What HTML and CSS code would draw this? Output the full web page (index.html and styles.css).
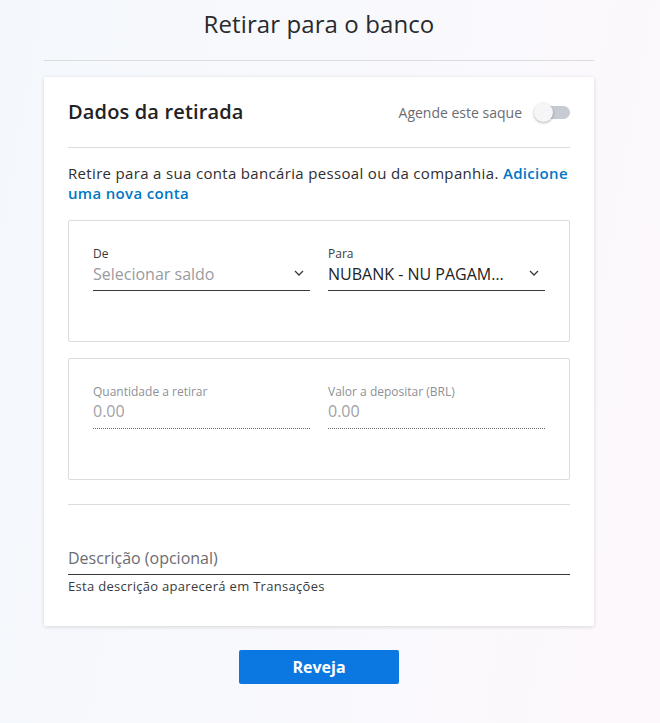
FILE: index.html
```html
<!DOCTYPE html>
<html lang="pt">
<head>
<meta charset="utf-8">
<title>Retirar para o banco</title>
<link rel="stylesheet" href="styles.css">
</head>
<body>
<div class="page">
  <h1 class="title">Retirar para o banco</h1>
  <div class="card">
    <div class="card-head">
      <h2 class="card-title">Dados da retirada</h2>
      <div class="schedule">
        <span class="schedule-label">Agende este saque</span>
        <span class="toggle"><span class="toggle-track"></span><span class="toggle-knob"></span></span>
      </div>
    </div>
    <p class="intro">Retire para a sua conta bancária pessoal ou da companhia. <a class="link" href="#">Adicione uma nova conta</a></p>

    <div class="box">
      <div class="field">
        <div class="label">De</div>
        <div class="select">
          <span class="value placeholder">Selecionar saldo</span>
          <svg class="chev" width="10" height="6" viewBox="0 0 10 6"><path d="M1 1l4 4 4-4" fill="none" stroke="#393a3d" stroke-width="1.3"/></svg>
        </div>
      </div>
      <div class="field">
        <div class="label">Para</div>
        <div class="select">
          <span class="value">NUBANK - NU PAGAM…</span>
          <svg class="chev" width="10" height="6" viewBox="0 0 10 6"><path d="M1 1l4 4 4-4" fill="none" stroke="#393a3d" stroke-width="1.3"/></svg>
        </div>
      </div>
    </div>

    <div class="box">
      <div class="field">
        <div class="label muted">Quantidade a retirar</div>
        <div class="amount">0.00</div>
      </div>
      <div class="field">
        <div class="label muted">Valor a depositar (BRL)</div>
        <div class="amount">0.00</div>
      </div>
    </div>

    <div class="divider"></div>

    <div class="desc-input">Descrição (opcional)</div>
    <div class="helper">Esta descrição aparecerá em Transações</div>
  </div>
  <div class="actions">
    <button class="btn">Reveja</button>
  </div>
</div>
</body>
</html>
```
FILE: styles.css
```css
* { box-sizing: border-box; }
html, body { margin: 0; padding: 0; }
body {
  font-family: "Open Sans", "Noto Sans", sans-serif;
  color: #393a3d;
  background: linear-gradient(100deg, #f4f8fc 0%, #f9f9fd 55%, #fdf8fb 100%);
  min-height: 723px;
}
.page {
  width: 550px;
  margin-left: 44px;
}
.title {
  margin: 0;
  height: 61px;
  line-height: 48px;
  text-align: center;
  font-size: 24px;
  font-weight: 400;
  color: #2a2a2c;
  border-bottom: 1px solid #dcdcde;
  letter-spacing: 0.1px;
}
.card {
  margin-top: 16px;
  background: #fff;
  border-radius: 2px;
  box-shadow: 0 1px 4px rgba(0,0,0,0.14);
  padding: 24px 24px 31px;
}
.card-head {
  display: flex;
  justify-content: space-between;
  align-items: center;
  height: 22px;
  padding-bottom: 24px;
  border-bottom: 1px solid #dcdcde;
  box-sizing: content-box;
}
.card-title {
  margin: 0;
  font-size: 20px;
  font-weight: 600;
  color: #222;
  line-height: 22px;
  letter-spacing: 0.15px;
}
.schedule {
  display: flex;
  align-items: center;
  gap: 12px;
}
.schedule-label {
  font-size: 14px;
  color: #6b6c72;
}
.toggle {
  position: relative;
  display: block;
  width: 36px;
  height: 20px;
}
.toggle-track {
  position: absolute;
  left: 6px;
  top: 4px;
  width: 30px;
  height: 13px;
  border-radius: 7px;
  background: #c7cbd4;
}
.toggle-knob {
  position: absolute;
  left: 0;
  top: 1px;
  width: 19px;
  height: 19px;
  border-radius: 50%;
  background: #f6f6f8;
  box-shadow: 0 1px 3px rgba(0,0,0,0.3);
}
.intro {
  margin: 15px 0 0;
  font-size: 15px;
  line-height: 20px;
  color: #2e2e30;
  font-weight: 500;
  letter-spacing: 0.33px;
}
.link {
  color: #0077c5;
  text-decoration: none;
  font-weight: 600;
}
.box {
  margin-top: 17px;
  height: 122px;
  border: 1px solid #dcdcde;
  border-radius: 2px;
  padding: 25px 24px 0;
  display: grid;
  grid-template-columns: 217px 217px;
  column-gap: 18px;
  align-items: start;
}
.box + .box { margin-top: 16px; }
.label {
  font-size: 12px;
  line-height: 16px;
  color: #393a3d;
}
.label.muted { color: #8d9096; }
.select {
  display: flex;
  align-items: center;
  justify-content: space-between;
  padding-bottom: 4px;
  border-bottom: 1px solid #393a3d;
  box-sizing: content-box;
  height: 24px;
}
.value {
  font-size: 16px;
  line-height: 24px;
  color: #222;
  white-space: nowrap;
}
.value.placeholder { color: #999b9f; }
.chev { margin-right: 6px; margin-top: -2px; }
.amount {
  font-size: 16px;
  line-height: 22px;
  color: #a0a2a6;
  padding-bottom: 6px;
  border-bottom: 1px dotted #6b6c72;
}
.divider {
  margin-top: 24px;
  border-top: 1px solid #dcdcde;
}
.desc-input {
  margin-top: 37px;
  height: 33px;
  line-height: 32px;
  font-size: 16px;
  color: #6b6c72;
  border-bottom: 1px solid #393a3d;
}
.helper {
  margin-top: 2px;
  font-size: 13px;
  line-height: 18px;
  color: #393a3d;
  letter-spacing: 0.3px;
}
.actions {
  display: flex;
  justify-content: center;
  margin-top: 24px;
}
.btn {
  width: 160px;
  height: 34px;
  border: none;
  border-radius: 2px;
  background: #0b77e0;
  color: #fff;
  font-family: "Open Sans", "Noto Sans", sans-serif;
  font-size: 16px;
  font-weight: 700;
}
```
